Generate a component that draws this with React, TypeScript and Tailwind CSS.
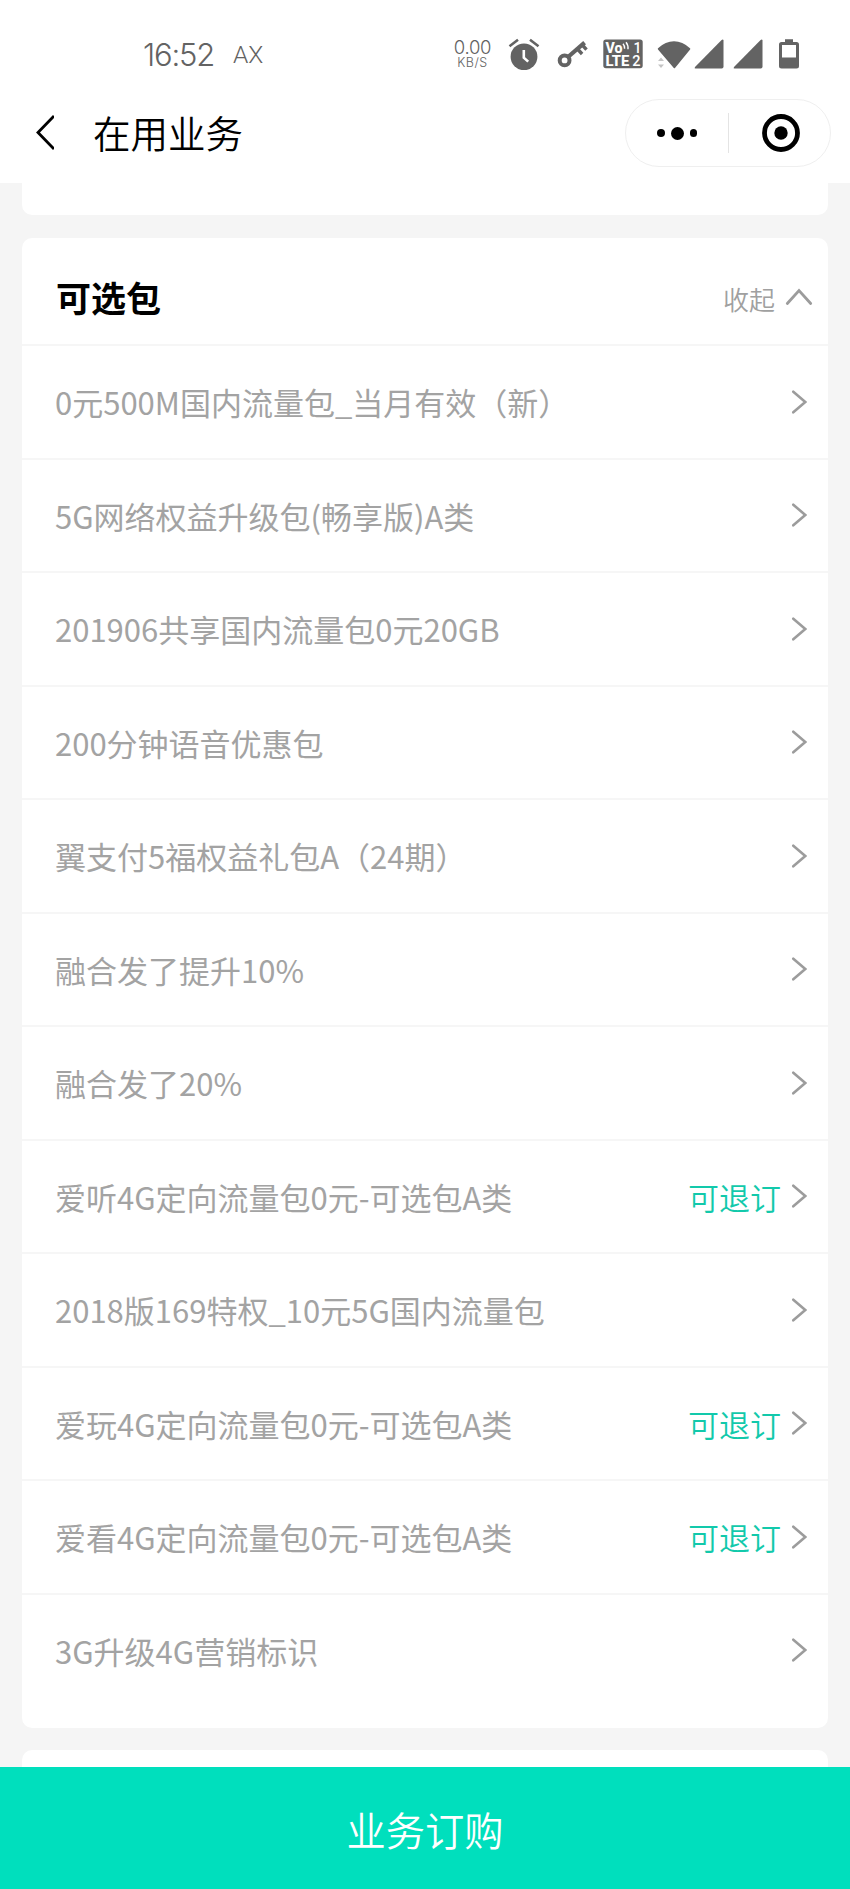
const PACKAGES = [
  { name: '0元500M国内流量包_当月有效（新）' },
  { name: '5G网络权益升级包(畅享版)A类' },
  { name: '201906共享国内流量包0元20GB' },
  { name: '200分钟语音优惠包' },
  { name: '翼支付5福权益礼包A（24期）' },
  { name: '融合发了提升10%' },
  { name: '融合发了20%' },
  { name: '爱听4G定向流量包0元-可选包A类', refundable: true },
  { name: '2018版169特权_10元5G国内流量包' },
  { name: '爱玩4G定向流量包0元-可选包A类', refundable: true },
  { name: '爱看4G定向流量包0元-可选包A类', refundable: true },
  { name: '3G升级4G营销标识' },
]

function AlarmIcon() {
  return (
    <svg className="h-8 w-8 shrink-0" viewBox="0 0 32 32" fill="none">
      <circle cx="16" cy="18.8" r="13.4" fill="#636363" />
      <path d="M1.5 8.2 10 1.8M22 1.8l8.5 6.4" stroke="#636363" strokeWidth="2.6" />
      <path d="M15.8 12v7.600l4.4 4" stroke="#fff" strokeWidth="2.6" />
    </svg>
  )
}

function KeyIcon() {
  return (
    <svg className="ml-4 h-8 w-8 shrink-0" viewBox="0 0 32 32" fill="none">
      <circle cx="8.6" cy="22.4" r="4.9" stroke="#636363" strokeWidth="4" />
      <path d="M12 19 28.6 4.6" stroke="#636363" strokeWidth="4.2" />
      <path d="m21.5 11 4.6 5M26.3 7l4.2 4.6" stroke="#636363" strokeWidth="3.4" />
    </svg>
  )
}

function VolteIcon() {
  return (
    <svg className="ml-[15px] h-[31px] w-10 shrink-0" viewBox="0 0 40 31" fontFamily="Roboto, 'Liberation Sans', sans-serif">
      <rect x="0.3" y="1.5" width="39.4" height="28.7" rx="2.6" fill="#636363" />
      <g fill="#fff" fontWeight="800">
        <text x="2.4" y="14.6" fontSize="14" textLength="17" lengthAdjust="spacingAndGlyphs">Vo</text>
        <text x="2.4" y="27.8" fontSize="14.500" textLength="24" lengthAdjust="spacingAndGlyphs">LTE</text>
      </g>
      <g fill="#fff" fontWeight="500">
        <text x="30.4" y="14.6" fontSize="14">1</text>
        <text x="29.2" y="27.8" fontSize="14.500">2</text>
      </g>
      <path d="M20 5.8q1.8 2 1.6 5M23 4.200q2.400 2.800 2 7" fill="none" stroke="#fff" strokeWidth="1.4" />
    </svg>
  )
}

function WifiIcon() {
  return (
    <svg className="ml-[14px] h-[31px] w-[34px] shrink-0" viewBox="0 0 34 31" fill="#636363">
      <path d="M1 10.200Q8.500 3.200 17 3.200T33 10.200q.6.6.1 1.200L18 30q-.6.700-1.200 0L1 11.400q-.5-.6 0-1.200Z" />
      <path d="M1 23 4 19.500 7 23ZM1 26.500 4 30l3-3.500Z" fill="#c4c4c4" />
    </svg>
  )
}

function SignalIcon() {
  return (
    <svg className="h-[31px] w-[30px] shrink-0" viewBox="0 0 30 31" fill="#636363">
      <path d="M1 29 27.600 1.900q1.700-1.200 1.900.7v26q0 1.900-1.800 1.900H1.500Q0 30.500 1 29Z" />
    </svg>
  )
}

function BatteryIcon() {
  return (
    <svg className="ml-4 h-[31px] w-5 shrink-0" viewBox="0 0 20 31">
      <path
        fillRule="evenodd"
        fill="#636363"
        d="M6 1.300h8V4h3.500Q20 4 20 6.500v21.600Q20 30.600 17.500 30.600h-15Q0 30.600 0 28.100V6.500Q0 4 2.500 4H6ZM3 7v12.500h14V7Z"
      />
    </svg>
  )
}

function StatusBar() {
  return (
    <div className="flex h-[82px] items-start pt-[38px] pl-[143px] text-[#636363]">
      <div className="w-[90px] font-[Inter] text-[31px] leading-[33px] font-light tracking-[-1.2px]">16:52</div>
      <div className="w-[217px] font-[Roboto] text-[24.500px] leading-[34px] font-light">AX</div>
      <div className="w-[45px] text-center font-[Inter] font-light">
        <div className="text-[18.500px] leading-[18px] tracking-[-0.300px]">0.00</div>
        <div className="text-[12.500px] leading-[14px] tracking-[0.500px]">KB/S</div>
      </div>
      <div className="ml-[13px] flex items-start">
        <AlarmIcon />
        <KeyIcon />
        <VolteIcon />
        <WifiIcon />
        <div className="ml-[3px] flex gap-[9px]">
          <SignalIcon />
          <SignalIcon />
        </div>
        <BatteryIcon />
      </div>
    </div>
  )
}

function NavBar() {
  return (
    <div className="flex h-[101px] items-start pt-[17px] pr-[19px] pl-[34px]">
      <svg className="mt-[15px] h-9 w-5" viewBox="0 0 20 36" fill="none" stroke="#000" strokeWidth="2.800">
        <path d="M20 2 4 18.500 20 35" />
      </svg>
      <h1 className="ml-[39px] text-[37.500px] leading-[66px] font-[350] text-black">在用业务</h1>
      <div className="ml-auto flex h-[68px] w-[206px] items-center rounded-full border-[1.500px] border-[#efefef]">
        <div className="flex w-[102px] items-center justify-center gap-[6px]">
          <span className="size-[7.500px] rounded-full bg-black" />
          <span className="size-[13px] rounded-full bg-black" />
          <span className="size-[7.500px] rounded-full bg-black" />
        </div>
        <div className="h-10 w-px bg-[#e4e4e4]" />
        <svg className="ml-8 size-10" viewBox="0 0 40 40">
          <circle cx="20" cy="20" r="16.500" fill="none" stroke="#000" strokeWidth="4.800" />
          <circle cx="20" cy="20" r="6.700" />
        </svg>
      </div>
    </div>
  )
}

function PackageRow({ name, refundable }: { name: string; refundable?: boolean }) {
  return (
    <div className="flex h-[113.500px] items-center border-t-2 border-[#f6f6f6] pr-[21px] pl-[33px] text-[31px]">
      <span className="pt-px text-[#a3a3a3]">{name}</span>
      {refundable && <span className="ml-auto pt-px font-[350] text-[#12c9ab]">可退订</span>}
      <svg
        className={refundable ? 'ml-[10px] h-6 w-4' : 'ml-auto h-6 w-4'}
        viewBox="0 0 16 24"
        fill="none"
        stroke="#9c9c9c"
        strokeWidth="2.600"
        strokeLinecap="round"
      >
        <path d="m2.300 1.700 12 10.300-12 10.300" />
      </svg>
    </div>
  )
}

export default function App() {
  return (
    <div
      lang="zh-CN"
      className="flex h-[1889px] w-[850px] flex-col overflow-hidden bg-[#f5f5f5] font-['Noto_Sans_CJK_SC',sans-serif]"
    >
      <header className="shrink-0 bg-white">
        <StatusBar />
        <NavBar />
      </header>

      <main className="min-h-0 flex-1 overflow-hidden px-[22px]">
        <div className="h-8 rounded-b-[10px] bg-white" />

        <section className="mt-[23px] h-[1490px] rounded-[10px] bg-white">
          <div className="flex h-[106px] items-center pt-3 pr-[15px] pl-[34px]">
            <h2 className="text-[35px] font-bold text-black">可选包</h2>
            <span className="mt-[3px] ml-auto text-[26px] font-[350] text-[#a0a0a0]">收起</span>
            <svg className="ml-[10px] h-[18px] w-7" viewBox="0 0 28 18" fill="none" stroke="#9c9c9c" strokeWidth="2.800" strokeLinecap="round">
              <path d="m2.300 15.500 11.700-13 11.700 13" />
            </svg>
          </div>
          {PACKAGES.map((item) => (
            <PackageRow key={item.name} {...item} />
          ))}
        </section>

        <div className="mt-[22px] h-10 rounded-t-[10px] bg-white" />
      </main>

      <button type="button" className="h-[122px] shrink-0 bg-[#00dfbd] pt-0.5 text-[39.300px] font-[350] text-white">
        业务订购
      </button>
    </div>
  )
}
